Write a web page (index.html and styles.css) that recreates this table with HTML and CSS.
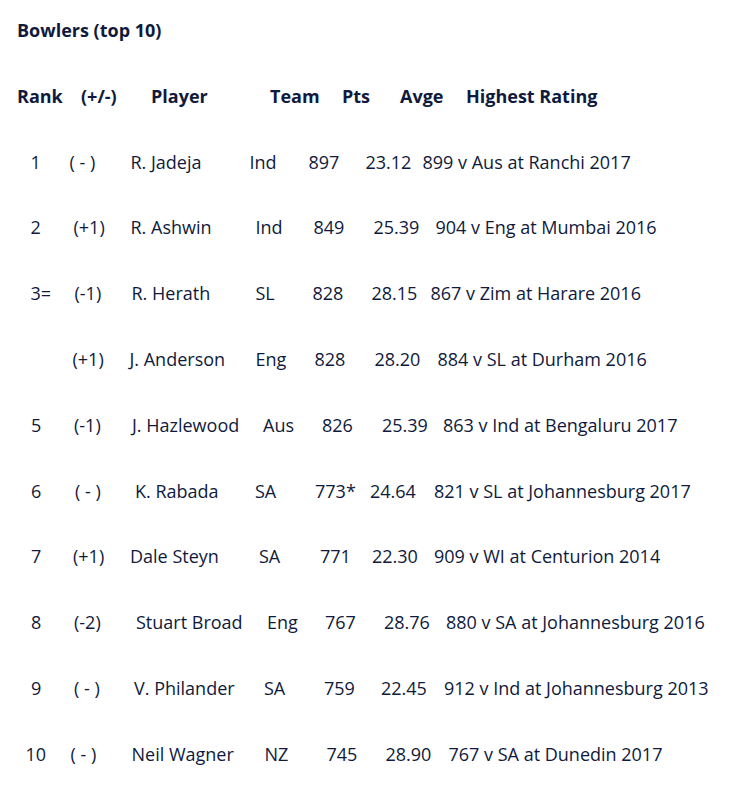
FILE: index.html
```html
<!DOCTYPE html>
<html lang="en">
<head>
<meta charset="utf-8">
<title>Bowlers (top 10)</title>
<link rel="stylesheet" href="styles.css">
</head>
<body>
<div class="page">
  <p class="title">Bowlers (top 10)</p>
  <div class="row hdr"><span>Rank</span><span>(+/-)</span><span>Player</span><span>Team</span><span>Pts</span><span>Avge</span><span>Highest Rating</span></div>
  <div class="row r1"><span>1</span><span>( - )</span><span>R. Jadeja</span><span>Ind</span><span>897</span><span>23.12</span><span>899 v Aus at Ranchi 2017</span></div>
  <div class="row r2"><span>2</span><span>(+1)</span><span>R. Ashwin</span><span>Ind</span><span>849</span><span>25.39</span><span>904 v Eng at Mumbai 2016</span></div>
  <div class="row r3"><span>3=</span><span>(-1)</span><span>R. Herath</span><span>SL</span><span>828</span><span>28.15</span><span>867 v Zim at Harare 2016</span></div>
  <div class="row r4"><span></span><span>(+1)</span><span>J. Anderson</span><span>Eng</span><span>828</span><span>28.20</span><span>884 v SL at Durham 2016</span></div>
  <div class="row r5"><span>5</span><span>(-1)</span><span>J. Hazlewood</span><span>Aus</span><span>826</span><span>25.39</span><span>863 v Ind at Bengaluru 2017</span></div>
  <div class="row r6"><span>6</span><span>( - )</span><span>K. Rabada</span><span>SA</span><span>773*</span><span>24.64</span><span>821 v SL at Johannesburg 2017</span></div>
  <div class="row r7"><span>7</span><span>(+1)</span><span>Dale Steyn</span><span>SA</span><span>771</span><span>22.30</span><span>909 v WI at Centurion 2014</span></div>
  <div class="row r8"><span>8</span><span>(-2)</span><span>Stuart Broad</span><span>Eng</span><span>767</span><span>28.76</span><span>880 v SA at Johannesburg 2016</span></div>
  <div class="row r9"><span>9</span><span>( - )</span><span>V. Philander</span><span>SA</span><span>759</span><span>22.45</span><span>912 v Ind at Johannesburg 2013</span></div>
  <div class="row r10"><span>10</span><span>( - )</span><span>Neil Wagner</span><span>NZ</span><span>745</span><span>28.90</span><span>767 v SA at Dunedin 2017</span></div>
</div>
</body>
</html>
```

FILE: styles.css
```css
html, body {
  margin: 0;
  padding: 0;
  background: #ffffff;
}

.page {
  display: flex;
  flex-direction: column;
  gap: 41.8px;
  padding: 18px 0 0 17px;
  font-family: "Open Sans", "Noto Sans", sans-serif;
  font-size: 18px;
  line-height: 24px;
  color: #0f1a3c;
}

.title {
  margin: 0;
  font-weight: 700;
}

.row {
  display: grid;
  white-space: nowrap;
  padding-left: 13.5px;
}

.row span {
  white-space: nowrap;
}

.hdr {
  font-weight: 700;
  padding-left: 0;
  grid-template-columns: 64px 70px 119px 72px 58px 66px auto;
}

.r1 { grid-template-columns: 39px 61px 119px 59px 57px 57px auto; }
.r2 { grid-template-columns: 43px 57px 125px 58px 60px 62px auto; }
.r3 { grid-template-columns: 44px 57px 124px 57px 59px 59px auto; }
.r4 { grid-template-columns: 42px 57px 126px 59px 60px 63px auto; }
.r5 { grid-template-columns: 43px 58px 131px 59px 60px 61px auto; padding-left: 14px; }
.r6 { grid-template-columns: 44px 60px 120px 60px 55px 64px auto; padding-left: 14px; }
.r7 { grid-template-columns: 42px 57px 129px 61px 52px 62px auto; padding-left: 14px; }
.r8 { grid-template-columns: 43px 62px 131px 58px 59px 62px auto; padding-left: 14px; }
.r9 { grid-template-columns: 43px 60px 130px 60px 57px 63px auto; padding-left: 14px; }
.r10 { grid-template-columns: 45px 61px 133px 62px 59px 63px auto; padding-left: 8.5px; }
```
